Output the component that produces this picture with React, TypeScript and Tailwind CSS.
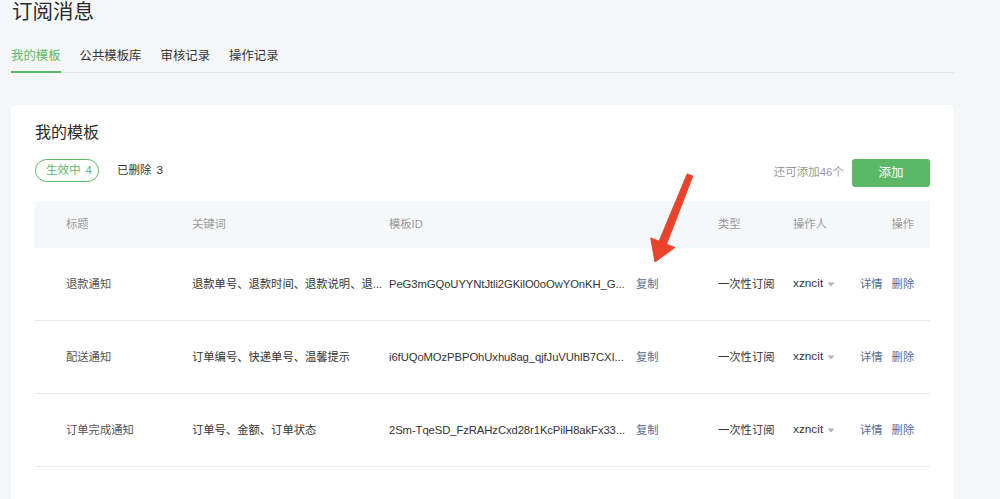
import React from "react";

const GREEN = "#5bb867";

const rows = [
  {
    title: "退款通知",
    keywords: "退款单号、退款时间、退款说明、退...",
    id: "PeG3mGQoUYYNtJtli2GKilO0oOwYOnKH_G...",
  },
  {
    title: "配送通知",
    keywords: "订单编号、快递单号、温馨提示",
    id: "i6fUQoMOzPBPOhUxhu8ag_qjfJuVUhlB7CXI...",
  },
  {
    title: "订单完成通知",
    keywords: "订单号、金额、订单状态",
    id: "2Sm-TqeSD_FzRAHzCxd28r1KcPilH8akFx33...",
  },
];

const gridCols = "grid grid-cols-[126px_197px_329px_75px_67px_1fr] pl-[31px] items-center";

export default function App() {
  return (
    <div
      className="relative min-h-screen bg-[#f5f6f8] text-[#353535] overflow-hidden"
      style={{ fontFamily: '"Liberation Sans", "Noto Sans CJK SC", sans-serif' }}
    >
      <div className="pl-[11px] w-[954px]">
        <h1 className="pl-px text-[20.5px] leading-[23px] text-[#2b2b2b]">订阅消息</h1>

        <div className="mt-[23px] flex gap-[19px] border-b border-[#e3e5e9] text-[12.4px]">
          <div className="-mb-px pb-[5px] leading-[20px] border-b-2 border-[#5bb867] text-[#5bb867]">
            我的模板
          </div>
          <div className="-mb-px pb-[5px] leading-[20px] border-b-2 border-transparent">公共模板库</div>
          <div className="-mb-px pb-[5px] leading-[20px] border-b-2 border-transparent">审核记录</div>
          <div className="-mb-px pb-[5px] leading-[20px] border-b-2 border-transparent">操作记录</div>
        </div>

        <div className="mt-[32px] rounded-[4px] bg-white px-[24px] pt-[16px] pb-[40px]">
          <h2 className="text-[16px] leading-[24px] text-[#2b2b2b]">我的模板</h2>

          <div className="mt-[14px] flex items-start justify-between">
            <div className="flex items-center h-[23px] text-[11.5px]">
              <div
                className="h-[23px] w-[64px] rounded-full border flex items-center gap-[5px] pl-[10px] whitespace-nowrap"
                style={{ borderColor: GREEN, color: GREEN }}
              >
                <span>生效中</span>
                <span>4</span>
              </div>
              <div className="ml-[18px] flex items-center gap-[5px] text-[#353535] whitespace-nowrap">
                <span>已删除</span>
                <span>3</span>
              </div>
            </div>
            <div className="flex items-center gap-[8px]">
              <span className="text-[11.5px] text-[#9a9a9a] whitespace-nowrap">还可添加46个</span>
              <button
                className="h-[28px] w-[78px] rounded-[3px] text-white text-[12.5px]"
                style={{ backgroundColor: GREEN }}
              >
                添加
              </button>
            </div>
          </div>

          <div className="mt-[14px] text-[11.3px]">
            <div className={`${gridCols} h-[47px] bg-[#f6f7f9] text-[#9a9a9a]`}>
              <div>标题</div>
              <div>关键词</div>
              <div>模板ID</div>
              <div>类型</div>
              <div>操作人</div>
              <div className="text-right pr-[16px]">操作</div>
            </div>
            {rows.map((r) => (
              <div key={r.title} className={`${gridCols} h-[73px] border-b border-[#e9e9ec]`}>
                <div className="text-[#555] whitespace-nowrap">{r.title}</div>
                <div className="whitespace-nowrap">{r.keywords}</div>
                <div className="flex items-center">
                  <span className="w-[247px] whitespace-nowrap tracking-[-0.1px]">{r.id}</span>
                  <span className="text-[#576b95] whitespace-nowrap">复制</span>
                </div>
                <div className="whitespace-nowrap">一次性订阅</div>
                <div className="flex items-center">
                  <span className="text-[11.8px]">xzncit</span>
                  <svg width="8" height="5" viewBox="0 0 8 5" className="ml-[4px] mt-[1px]">
                    <polygon points="0.5,0.5 7.5,0.5 4,4.5" fill="#b2b2b2" />
                  </svg>
                </div>
                <div className="flex justify-end gap-[9px] pr-[16px] text-[#576b95] whitespace-nowrap">
                  <span>详情</span>
                  <span>删除</span>
                </div>
              </div>
            ))}
          </div>
        </div>
      </div>

      <svg
        className="pointer-events-none absolute left-0 top-0"
        width="1000"
        height="499"
        viewBox="0 0 1000 499"
      >
        <polygon
          points="687.2,173.9 692.8,176.1 666.5,244.2 674.9,247.5 655,262 650.7,237.9 659.1,241.2"
          fill="#e9432c"
          stroke="#e9432c"
          strokeWidth="1"
          strokeLinejoin="round"
        />
      </svg>
    </div>
  );
}
